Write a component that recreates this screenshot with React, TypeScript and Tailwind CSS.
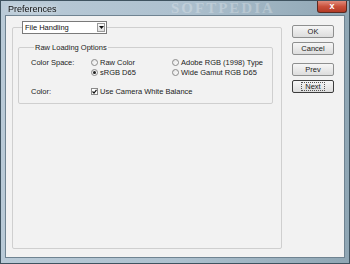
import React from "react";

const font = "font-['Liberation_Sans',Arial,sans-serif]";

function Radio({ checked, label }: { checked?: boolean; label: string }) {
  return (
    <div className="flex items-center h-[10px]">
      <span className="w-[7px] h-[7px] rounded-full border border-[#8a8a8a] bg-gradient-to-br from-[#e2e2e2] to-white flex items-center justify-center">
        {checked && <span className="w-[3px] h-[3px] rounded-full bg-[#202020]" />}
      </span>
      <span className="ml-[2px] text-[7.5px] text-[#222]">{label}</span>
    </div>
  );
}

function Btn({ label, focused }: { label: string; focused?: boolean }) {
  return (
    <div
      className={`h-[13px] w-[42px] rounded-[2px] border ${
        focused ? "border-[#3c3c3c]" : "border-[#8e8f8f]"
      } bg-gradient-to-b from-[#f6f6f6] to-[#dddddd] flex items-center justify-center`}
    >
      <span className={`text-[7.5px] leading-none text-[#222] ${focused ? "outline outline-1 outline-dotted outline-[#555] px-[3px]" : ""}`}>
        {label}
      </span>
    </div>
  );
}

export default function App() {
  return (
    <div className={`w-[350px] h-[264px] flex flex-col bg-gradient-to-r from-[#b9cad7] via-[#aec1cf] to-[#8fa6b4] border border-[#3f5360] ${font}`}>
      {/* title bar */}
      <div className="h-[14px] flex items-start relative">
        <span className="ml-[7px] mt-[2px] text-[9px] text-[#111] drop-shadow-[0_0_3px_#ffffff]">Preferences</span>
        <span className="absolute left-[170px] top-[0px] text-[15px] font-bold tracking-[2px] text-white/25 leading-none font-['Liberation_Serif',serif]">
          SOFTPEDIA
        </span>
        <div className="ml-auto mr-[2px] w-[30px] h-[12px] rounded-b-[3px] border border-t-0 border-[#5b2a22] bg-gradient-to-b from-[#e08a7a] via-[#c9503b] to-[#b23a25] flex items-center justify-center">
          <span className="text-white text-[9px] font-bold leading-none">x</span>
        </div>
      </div>

      {/* client area */}
      <div className="mx-[4px] h-[243px] border border-[#6f8391] bg-[#f2f2f2] flex pl-[6px] pt-[5px] text-[#222]">
        <fieldset className="w-[270px] h-[228px] border border-[#cfcfcf] rounded-[2px] pl-[5px] pr-[8px]">
          <legend className="ml-[4px]">
            <div className="w-[85px] h-[13px] bg-white border border-[#7a7a7a] flex items-center">
              <span className="ml-[2px] text-[7.5px] leading-none text-[#111]">File Handling</span>
              <div className="ml-auto mr-[1px] w-[8px] h-[9px] bg-gradient-to-b from-[#fafafa] to-[#dedede] border border-[#9a9a9a] flex items-center justify-center">
                <svg width="5" height="3" viewBox="0 0 5 3">
                  <path d="M0 0 L5 0 L2.5 3 Z" fill="#111" />
                </svg>
              </div>
            </div>
          </legend>

          <fieldset className="mt-[10px] h-[60px] border border-[#cfcfcf] rounded-[2px] pl-[12px]">
            <legend className="ml-[3px] px-[1px] text-[7.5px] leading-none text-[#222]">Raw Loading Options</legend>
            <div className="mt-[6px] flex">
              <span className="w-[60px] text-[7.5px] leading-[10px]">Color Space:</span>
              <div className="w-[81px] flex flex-col">
                <Radio label="Raw Color" />
                <Radio checked label="sRGB D65" />
              </div>
              <div className="flex flex-col">
                <Radio label="Adobe RGB (1998) Type" />
                <Radio label="Wide Gamut RGB D65" />
              </div>
            </div>
            <div className="mt-[9px] flex items-center h-[10px]">
              <span className="w-[60px] text-[7.5px]">Color:</span>
              <span className="w-[7px] h-[7px] border border-[#8a8a8a] bg-white flex items-center justify-center">
                <svg width="5" height="5" viewBox="0 0 5 5">
                  <path d="M0.5 2.5 L2 4 L4.5 0.8" stroke="#111" strokeWidth="1.2" fill="none" />
                </svg>
              </span>
              <span className="ml-[2px] text-[7.5px]">Use Camera White Balance</span>
            </div>
          </fieldset>
        </fieldset>

        <div className="ml-[10px] pt-[4px] flex flex-col">
          <Btn label="OK" />
          <div className="mt-[4px]">
            <Btn label="Cancel" />
          </div>
          <div className="mt-[8px]">
            <Btn label="Prev" />
          </div>
          <div className="mt-[4px]">
            <Btn label="Next" focused />
          </div>
        </div>
      </div>
    </div>
  );
}
